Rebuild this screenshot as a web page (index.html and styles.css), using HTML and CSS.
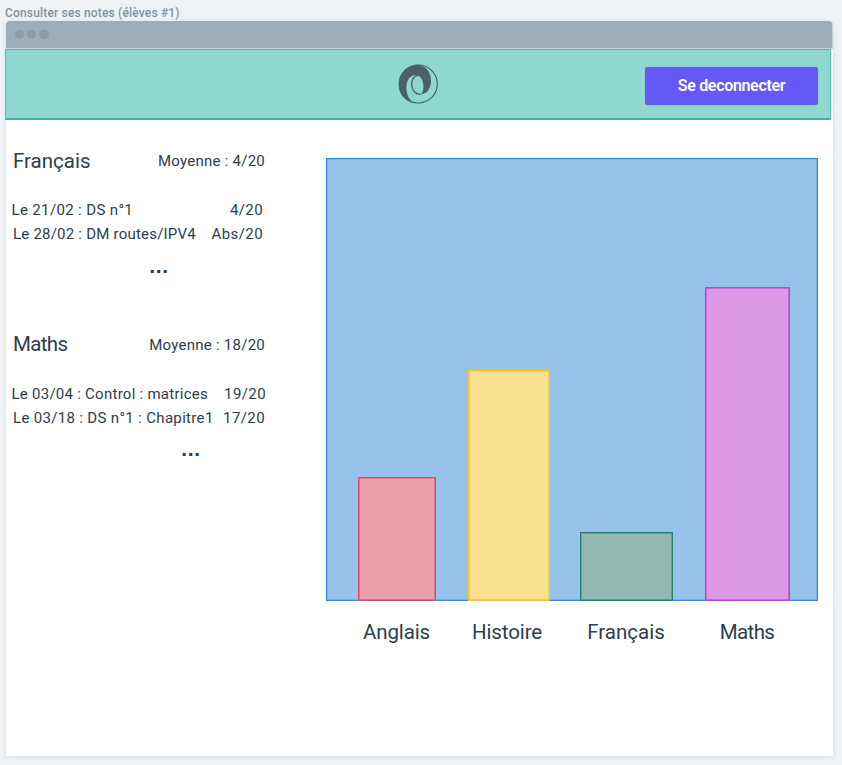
FILE: index.html
```html
<!DOCTYPE html>
<html lang="fr">
<head>
<meta charset="utf-8">
<title>Consulter ses notes</title>
<link rel="stylesheet" href="styles.css">
</head>
<body>
<div class="frame-title">Consulter ses notes (élèves #1)</div>
<main class="window">
  <div class="titlebar"><i></i><i></i><i></i></div>
  <header class="header">
    <svg class="logo" viewBox="0 0 120 120" aria-hidden="true">
      <circle cx="61" cy="60" r="57" fill="none" stroke="#4b5f6d" stroke-width="3.5"/>
      <path fill="#4b5f6d" d="M50 118C18 112 2 88 2 60C2 27 27 2 60 2C85 5 99 25 99 51C99 74 86 91 68 91C82 82 78 43 61 35C39 28 25 46 25 71C25 91 33 108 50 118Z"/>
      <path fill="#8fd8cf" d="M61 35C47 36 41 47 41 61C41 77 51 91 65 88C78 76 75 43 61 35Z"/>
      <path fill="none" stroke="#4b5f6d" stroke-width="4" d="M61 34C47 36 41 47 41 61C41 77 51 91 68 91"/>
    </svg>
    <button class="logout">Se deconnecter</button>
  </header>
  <div class="content">
    <div class="subjects">
      <section class="subject">
        <div class="subject-head"><h2>Français</h2><span class="average">Moyenne : 4/20</span></div>
        <div class="grade first ds"><span>Le 21/02 : DS n°1</span><span>4/20</span></div>
        <div class="grade dm"><span>Le 28/02 : DM routes/IPV4</span><span>Abs/20</span></div>
        <div class="more">...</div>
      </section>
      <section class="subject maths">
        <div class="subject-head"><h2>Maths</h2><span class="average">Moyenne : 18/20</span></div>
        <div class="grade first control"><span>Le 03/04 : Control : matrices</span><span>19/20</span></div>
        <div class="grade chapter"><span>Le 03/18 : DS n°1 : Chapitre1</span><span>17/20</span></div>
        <div class="more">...</div>
      </section>
    </div>
    <div class="chart">
      <div class="plot">
        <div class="bar red"></div>
        <div class="bar yellow"></div>
        <div class="bar green"></div>
        <div class="bar purple"></div>
      </div>
      <div class="labels"><span>Anglais</span><span>Histoire</span><span>Français</span><span>Maths</span></div>
    </div>
  </div>
</main>
</body>
</html>
```
FILE: styles.css
```css
* { box-sizing: border-box; }
body {
  margin: 0;
  height: 765px;
  overflow: hidden;
  background: #eff3f6;
  color: #2d3e4c;
  font-family: Roboto, "Liberation Sans", sans-serif;
}
.frame-title {
  height: 21px;
  padding: 5px 0 0 5px;
  font-size: 12px;
  line-height: 16px;
  font-weight: 500;
  letter-spacing: .17px;
  color: #8192a0;
  white-space: nowrap;
}
.window {
  width: 827px;
  height: 735px;
  margin-left: 6px;
  background: #fff;
  border-radius: 4px 4px 0 0;
  box-shadow: 0 1px 5px rgba(45, 62, 76, .13);
}
.titlebar {
  display: flex;
  gap: 3px;
  height: 28px;
  padding: 9px 0 0 8.5px;
  background: #9eadba;
  border-right: 1px solid #c9d1d8;
  border-bottom: 1px solid #c9d1d8;
  border-radius: 4px 4px 0 0;
}
.titlebar i { width: 9.4px; height: 9.4px; border-radius: 50%; background: #8b9cab; }
.header {
  display: grid;
  grid-template-columns: 1fr 40px 1fr;
  align-items: center;
  width: 826px;
  height: 71px;
  margin-left: -1px;
  background: #8fd8cf;
  border: 1px solid #53bfb3;
  border-bottom: 2px solid #3db6a9;
}
.logo { grid-column: 2; width: 40px; height: 40px; }
.logout {
  justify-self: end;
  width: 173px;
  height: 38px;
  margin: 3px 12px 0 0;
  padding: 0;
  border: 0;
  border-radius: 3px;
  background: #6558f5;
  box-shadow: 0 0 1px rgba(45, 62, 76, .4);
  color: #fff;
  font: 600 16px/38px Roboto, sans-serif;
  letter-spacing: -.33px;
}
.content { display: flex; }
.subjects { width: 320px; padding: 28px 0 0 6px; }
.subject { height: 184px; }
.subject-head {
  display: flex;
  justify-content: space-between;
  align-items: center;
  width: 253px;
  height: 26px;
  padding-left: 1px;
}
h2 { margin: 0; font-size: 20.5px; font-weight: 400; }
.maths h2 { margin-top: -2px; letter-spacing: -.65px; }
.average { font-size: 15px; letter-spacing: .25px; }
.grade {
  display: flex;
  justify-content: space-between;
  width: 251px;
  height: 24px;
  padding-left: 1px;
  font-size: 15px;
  line-height: 24px;
  letter-spacing: .4px;
  white-space: nowrap;
}
.first { margin-top: 24px; padding-left: 0; }
.first span:first-child { margin-left: -.5px; }
.ds span:first-child { letter-spacing: .36px; }
.dm span:first-child { letter-spacing: .22px; }
.control span:first-child { letter-spacing: .26px; }
.chapter span:first-child { letter-spacing: .33px; }
.control { width: 254px; }
.chapter { width: 253px; }
.more {
  width: 294px;
  margin-top: 7px;
  text-align: center;
  font-family: "Liberation Sans", sans-serif;
  font-size: 21px;
  font-weight: 700;
  line-height: 26px;
  letter-spacing: .7px;
}
.maths .more { width: 358px; margin-top: 6px; }
.chart { width: 492px; padding-top: 38px; }
.plot {
  display: flex;
  align-items: flex-end;
  height: 443px;
  padding-left: 31px;
  background: #96c2eb;
  border: 1px solid #3289d9;
  box-shadow: inset 0 0 0 1px #7bb3e6;
}
.bar { border: 1px solid; margin-bottom: -1px; }
.red { width: 78px; height: 124px; margin-right: 32px; background: #e9a1ac; border-color: #d94b62; box-shadow: inset 0 0 0 1px #de7486; }
.yellow { width: 82px; height: 231px; margin-right: 30px; background: #fae191; border-color: #f8c42f; box-shadow: inset 0 0 0 1px #f7cf58; }
.green { width: 93px; height: 69px; margin-right: 32px; background: #92bab2; border-color: #26806e; box-shadow: inset 0 0 0 1px #60a093; }
.purple { width: 85px; height: 314px; background: #de98e8; border-color: #bc43cf; box-shadow: inset 0 0 0 1px #ca64da; }
.labels {
  display: flex;
  margin-top: 18px;
  font-size: 20.5px;
  line-height: 26px;
}
.labels span { text-align: center; }
.labels span:nth-child(1) { width: 141px; letter-spacing: -.1px; }
.labels span:nth-child(2) { width: 80px; letter-spacing: -.1px; }
.labels span:nth-child(3) { width: 158px; }
.labels span:nth-child(4) { width: 84px; letter-spacing: -.6px; }
```
